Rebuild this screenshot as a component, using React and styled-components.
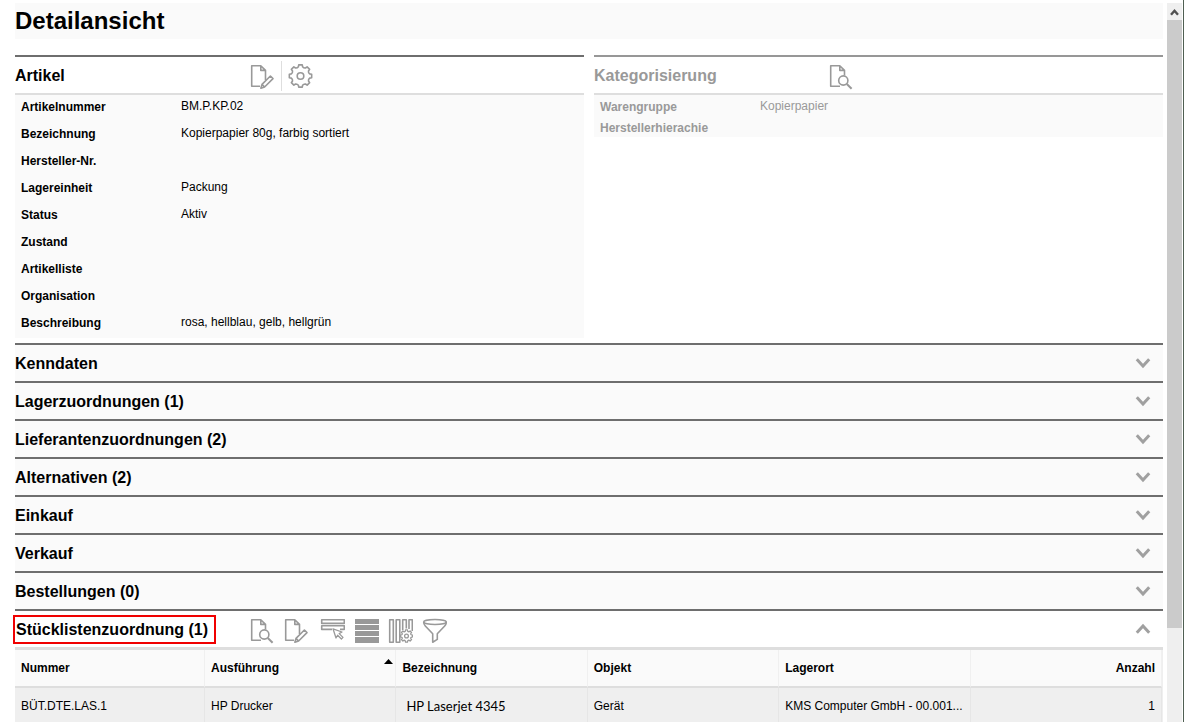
import React, { useState } from 'react'
import styled, { createGlobalStyle, css } from 'styled-components'

const GlobalStyle = createGlobalStyle`
    * {
        box-sizing: border-box;
    }
    body {
        margin: 0;
        background: #fff;
        color: #000;
        font-family: "Liberation Sans", Arial, sans-serif;
        font-size: 12px;
    }
    button {
        margin: 0;
        padding: 0;
        border: 0;
        background: none;
        color: inherit;
        font: inherit;
        cursor: pointer;
    }
`
const Page = styled.div`
    display: grid;
    grid-template-columns: 1fr 17px;
    height: 100vh;
    padding-top: 3px;
    border-right: 1px solid #4f5f52;
    overflow: hidden;
`
const Content = styled.main`
    min-width: 0;
    padding: 0 3px 0 15px;
    overflow: hidden;
`
const PageTitle = styled.h1`
    margin: 0 0 16px;
    background: #fafafa;
    font-size: 24px;
    line-height: 36px;
`
const Panels = styled.div`
    display: grid;
    grid-template-columns: 1fr 1fr;
    align-items: start;
    gap: 10px;
    margin-bottom: 5px;
`
const Panel = styled.section`
    border-top: 2px solid ${props => (props.$muted ? '#979797' : '#6e6e6e')};
    color: ${props => (props.$muted ? '#999' : '#000')};
`
const Header = styled.div`
    display: grid;
    grid-template-columns: 234px 1fr auto;
    align-items: center;
    height: ${props => (props.$thick ? 39 : 38)}px;
    border-bottom: ${props => (props.$thick ? 3 : 2)}px solid #dedede;
`
const Heading = styled.h2`
    margin: 0;
    padding-top: 2px;
    font-size: 16px;
    line-height: 34px;
`
const Marked = styled.span`
    display: inline-block;
    padding: 0 6px 0 1px;
    outline: 2px solid #f00000;
    line-height: 25px;
`
const Toolbar = styled.div`
    display: flex;
    align-items: center;
    gap: ${props => props.$gap || 6}px;
    padding-top: 2px;
`
const IconButton = styled.button`
    display: block;
    width: 28px;
    height: 28px;
    color: #999;

    svg {
        display: block;
    }
`
const Divider = styled.span`
    width: 1px;
    height: 30px;
    background: #dedede;
`
const Fields = styled.dl`
    margin: 0;
    background: #fafafa;
`
const Field = styled.div`
    display: grid;
    grid-template-columns: 160px 1fr;
    height: ${props => (props.$dense ? 21 : 27)}px;
    padding-left: 6px;

    dt {
        font-weight: bold;
        line-height: 24px;
    }
    dd {
        margin: 0;
        line-height: 22px;
    }
`
const Section = styled.section`
    border-top: 2px solid #6e6e6e;
    background: ${props => (props.$open ? '#fff' : '#fafafa')};
`
const SectionToggle = styled.button`
    display: flex;
    justify-content: space-between;
    align-items: center;
    width: 100%;
    height: 36px;
    padding-right: 12px;
    text-align: left;
`
const CollapseButton = styled.button`
    display: block;
    padding: 10px 12px;
`
const ChevronIcon = styled.svg`
    display: block;
    width: 16px;
    height: 16px;
    fill: none;
    stroke: #a0a0a0;
    stroke-width: 3;
    ${props => props.$up && css`
        transform: rotate(180deg);
    `}
`
const TableWrap = styled.div`
    padding-right: 1px;
    background: #efefef;
`
const Table = styled.table`
    width: 100%;
    border-collapse: separate;
    border-spacing: 0;
    table-layout: fixed;

    th, td {
        height: 36px;
        padding: 0 2px 0 6px;
        border-right: 1px solid #e6e6e6;
        text-align: left;
        white-space: nowrap;
        overflow: hidden;
    }
    th {
        height: 38px;
        border-right-color: #f0f0f0;
        border-bottom: 2px solid #dedede;
        background: #fafafa;
    }
    th:first-child {
        width: 190px;
    }
    th:last-child, td:last-child {
        padding-right: 6px;
        text-align: right;
    }
`
const SortHeader = styled.button`
    display: flex;
    justify-content: space-between;
    width: 100%;
    font-weight: bold;

    svg {
        display: block;
        margin-top: -2px;
    }
`
const ItemName = styled.span`
    padding-left: 4px;
    font-family: Lato, sans-serif;
    font-size: 13px;
`
const Scrollbar = styled.div`
    display: flex;
    flex-direction: column;
    margin: 0 1px;
    background: #efefef;
`
const ScrollUp = styled.button`
    height: 17px;

    svg {
        display: block;
    }
`
const ScrollThumb = styled.div`
    height: 84.5%;
    background: #cbcbcb;
`

const gearPath = (cx, cy, outer, inner, teeth) => {
    const step = (Math.PI * 2) / teeth
    const point = (r, a) => `${(cx + r * Math.sin(a)).toFixed(2)} ${(cy - r * Math.cos(a)).toFixed(2)}`
    let d = ''
    for (let i = 0; i < teeth; i++) {
        const a = i * step
        d += `${i ? 'L' : 'M'}${point(outer, a - step * 0.2)}`
        d += `L${point(outer, a + step * 0.2)}`
        d += `L${point(inner + 0.4, a + step * 0.29)}`
        d += `Q${point(inner - 0.6, a + step * 0.5)} ${point(inner + 0.4, a + step * 0.71)}`
    }
    return d + 'Z'
}

const Icon = ({ children }) => (
    <svg width="28" height="28" viewBox="0 0 28 28" fill="none" stroke="currentColor" strokeWidth="1.6" strokeLinejoin="round" aria-hidden="true">
        {children}
    </svg>
)

const EditIcon = () => (
    <Icon>
        <path d="M11 24.2H2.7V3.7H11.8L16.5 8.4V18M11.8 3.7V8.4H16.5" />
        <path d="M21.4 14L24 16.6L15.6 25L11.9 26.3L13 22.4ZM13 22.4L15.6 25" />
    </Icon>
)
const ViewIcon = () => (
    <Icon>
        <path d="M12 24.2H2.7V3.7H11.8L16.5 8.4V13.5M11.8 3.7V8.4H16.5" />
        <circle cx="15.3" cy="18.5" r="4.6" />
        <path d="M18.8 22L23.6 26.8" strokeWidth="2" />
    </Icon>
)
const GearIcon = () => (
    <Icon>
        <path d={gearPath(14.5, 14, 11.3, 9, 8)} />
        <circle cx="14.5" cy="14" r="3.3" />
    </Icon>
)
const SelectIcon = () => (
    <Icon>
        <path d="M4.7 3.7H27.3V7.4H4.7ZM15 13.4H4.7V9.7H27.3V13.4H23" />
        <path d="M16 12.8L25 16L22.2 17.6L26 21.4L24.4 23L20.6 19.2L19 22Z" strokeWidth="1.3" />
    </Icon>
)
const RowsIcon = () => (
    <Icon>
        <path d="M4 3H28V8H4ZM4 9H28V14H4ZM4 15H28V20H4ZM4 21H28V27H4Z" fill="currentColor" stroke="none" />
    </Icon>
)
const ColumnsIcon = () => (
    <Icon>
        <path d="M4.7 3.7H8.3V26.3H4.7ZM11.2 3.7H14.8V26.3H11.2ZM17.7 14V3.7H21.3V12.5M24 13V3.7H27.3V15" />
        <path d={gearPath(21.5, 20, 6.2, 4.8, 8)} strokeWidth="1.3" />
        <circle cx="21.5" cy="20" r="1.9" strokeWidth="1.3" />
    </Icon>
)
const FilterIcon = () => (
    <Icon>
        <ellipse cx="16" cy="6" rx="11.3" ry="2.5" />
        <path d="M4.7 6C4.7 8 5.2 8.8 6.3 10L13.7 17.8V26.2L18.3 23.4V17.8L25.7 10C26.8 8.8 27.3 8 27.3 6" />
    </Icon>
)
const Chevron = ({ up }) => (
    <ChevronIcon $up={up} viewBox="0 0 16 16" aria-hidden="true">
        <path d="M1.8 4.3L8 11L14.2 4.3" />
    </ChevronIcon>
)

const articleFields = [
    ['Artikelnummer', 'BM.P.KP.02'],
    ['Bezeichnung', 'Kopierpapier 80g, farbig sortiert'],
    ['Hersteller-Nr.', ''],
    ['Lagereinheit', 'Packung'],
    ['Status', 'Aktiv'],
    ['Zustand', ''],
    ['Artikelliste', ''],
    ['Organisation', ''],
    ['Beschreibung', 'rosa, hellblau, gelb, hellgrün'],
]
const categoryFields = [
    ['Warengruppe', 'Kopierpapier'],
    ['Herstellerhierachie', ''],
]
const sections = [
    'Kenndaten',
    'Lagerzuordnungen (1)',
    'Lieferantenzuordnungen (2)',
    'Alternativen (2)',
    'Einkauf',
    'Verkauf',
    'Bestellungen (0)',
]
const tools = [
    ['Ansehen', ViewIcon],
    ['Bearbeiten', EditIcon],
    ['Auswählen', SelectIcon],
    ['Zeilen', RowsIcon],
    ['Spalten', ColumnsIcon],
    ['Filter', FilterIcon],
]

const FieldList = ({ fields, dense }) => (
    <Fields>
        {fields.map(([label, value]) => (
            <Field key={label} $dense={dense}>
                <dt>{label}</dt>
                <dd>{value}</dd>
            </Field>
        ))}
    </Fields>
)

const CollapsedSection = ({ title }) => {
    const [open, setOpen] = useState(false)
    return (
        <Section>
            <SectionToggle type="button" aria-expanded={open} onClick={() => setOpen(!open)}>
                <Heading as="span"><b>{title}</b></Heading>
                <Chevron up={open} />
            </SectionToggle>
        </Section>
    )
}

const PartsList = () => {
    const [open, setOpen] = useState(true)
    return (
        <Section $open>
            <Header $thick>
                <Heading><Marked>Stücklistenzuordnung (1)</Marked></Heading>
                <Toolbar>
                    {tools.map(([label, ToolIcon]) => (
                        <IconButton key={label} type="button" aria-label={label}><ToolIcon /></IconButton>
                    ))}
                </Toolbar>
                <CollapseButton type="button" aria-label="Stücklistenzuordnung" aria-expanded={open} onClick={() => setOpen(!open)}>
                    <Chevron up={open} />
                </CollapseButton>
            </Header>
            {open && (
                <TableWrap>
                    <Table>
                        <thead>
                            <tr>
                                <th>Nummer</th>
                                <th aria-sort="ascending">
                                    <SortHeader type="button">
                                        Ausführung
                                        <svg width="9" height="5" viewBox="0 0 9 5" aria-hidden="true"><path d="M0 5L4.5 0L9 5Z" /></svg>
                                    </SortHeader>
                                </th>
                                <th>Bezeichnung</th>
                                <th>Objekt</th>
                                <th>Lagerort</th>
                                <th>Anzahl</th>
                            </tr>
                        </thead>
                        <tbody>
                            <tr>
                                <td>BÜT.DTE.LAS.1</td>
                                <td>HP Drucker</td>
                                <td><ItemName>HP Laserjet 4345</ItemName></td>
                                <td>Gerät</td>
                                <td>KMS Computer GmbH - 00.001...</td>
                                <td>1</td>
                            </tr>
                        </tbody>
                    </Table>
                </TableWrap>
            )}
        </Section>
    )
}

export default function App() {
    return (
        <Page>
            <GlobalStyle />
            <Content>
                <PageTitle>Detailansicht</PageTitle>
                <Panels>
                    <Panel>
                        <Header>
                            <Heading>Artikel</Heading>
                            <Toolbar $gap={4}>
                                <IconButton type="button" aria-label="Bearbeiten"><EditIcon /></IconButton>
                                <Divider />
                                <IconButton type="button" aria-label="Einstellungen"><GearIcon /></IconButton>
                            </Toolbar>
                        </Header>
                        <FieldList fields={articleFields} />
                    </Panel>
                    <Panel $muted>
                        <Header>
                            <Heading>Kategorisierung</Heading>
                            <Toolbar>
                                <IconButton type="button" aria-label="Ansehen"><ViewIcon /></IconButton>
                            </Toolbar>
                        </Header>
                        <FieldList fields={categoryFields} dense />
                    </Panel>
                </Panels>
                {sections.map(title => <CollapsedSection key={title} title={title} />)}
                <PartsList />
            </Content>
            <Scrollbar>
                <ScrollUp type="button" aria-label="Nach oben">
                    <svg width="15" height="17" viewBox="0 0 15 17" fill="none" stroke="#505050" strokeWidth="2.4" aria-hidden="true">
                        <path d="M4 11.8L7.5 7.8L11 11.8" />
                    </svg>
                </ScrollUp>
                <ScrollThumb />
            </Scrollbar>
        </Page>
    )
}
